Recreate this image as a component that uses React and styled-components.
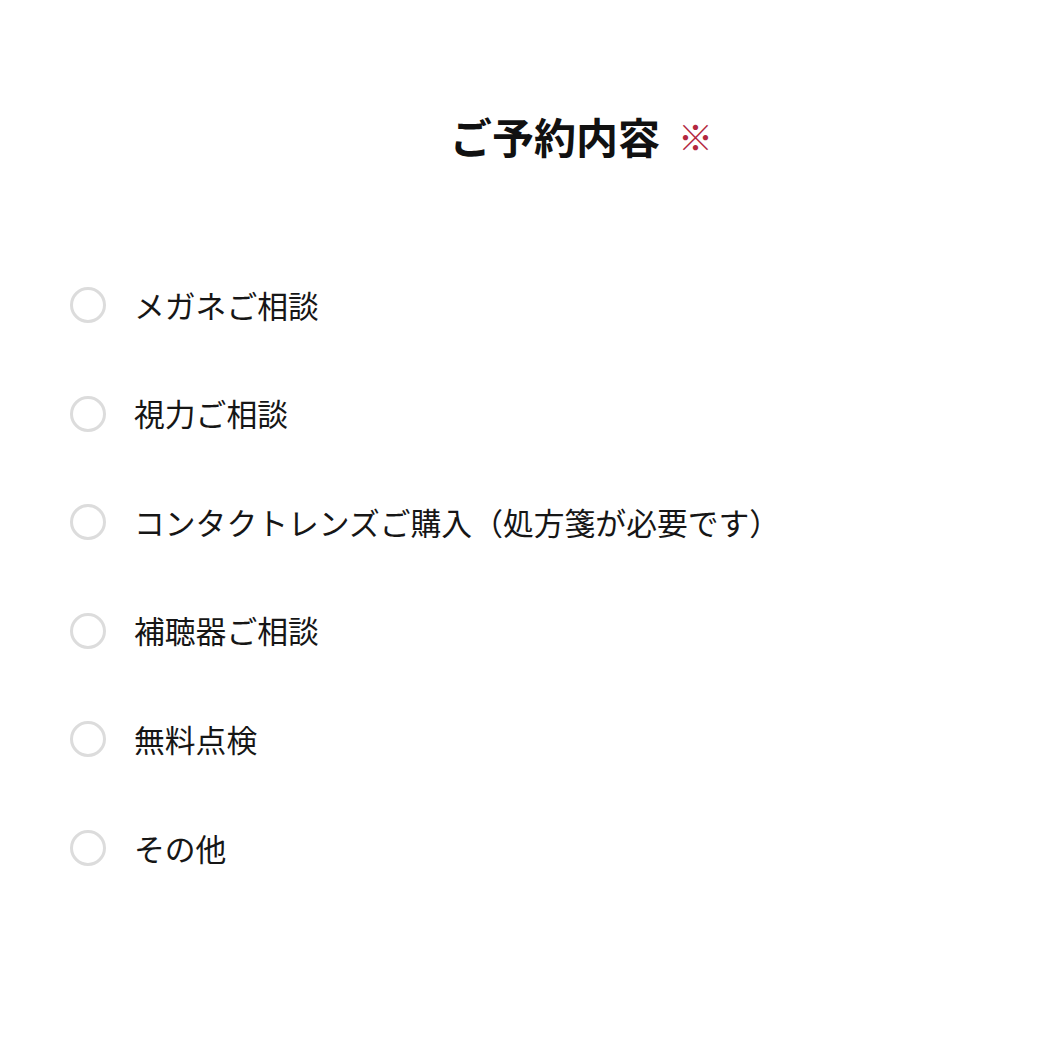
import React from 'react'
import styled, { createGlobalStyle } from 'styled-components'

const GlobalStyle = createGlobalStyle`
  body {
    margin: 0;
    background: #fff;
    font-family: "Noto Sans CJK JP", "Noto Sans", sans-serif;
  }
`

const Page = styled.div`
  width: 1050px;
  height: 1050px;
  box-sizing: border-box;
  padding: 107px 0 0 70px;
  background: #fff;
`

const Title = styled.h2`
  margin: 0 0 113px 380px;
  display: flex;
  align-items: center;
  gap: 18px;
  font-size: 42px;
  font-weight: 700;
  line-height: 58px;
  color: #111;
`

const Mark = styled.span`
  color: #b3283f;
  font-size: 35px;
  font-weight: 400;
`

const List = styled.div`
  display: flex;
  flex-direction: column;
  gap: 54.6px;
`

const Row = styled.label`
  display: flex;
  align-items: center;
  gap: 28px;
  height: 54px;
  cursor: pointer;
`

const Radio = styled.span`
  width: 36px;
  height: 36px;
  box-sizing: border-box;
  border-radius: 50%;
  border: 3px solid #dcdcdc;
  flex-shrink: 0;
`

const Label = styled.span`
  font-size: 30.8px;
  color: #161616;
  line-height: 1;
`

const items = [
  'メガネご相談',
  '視力ご相談',
  'コンタクトレンズご購入（処方箋が必要です）',
  '補聴器ご相談',
  '無料点検',
  'その他',
]

export default function App() {
  return (
    <Page>
      <GlobalStyle />
      <Title>
        ご予約内容<Mark>※</Mark>
      </Title>
      <List>
        {items.map((t) => (
          <Row key={t}>
            <Radio />
            <Label>{t}</Label>
          </Row>
        ))}
      </List>
    </Page>
  )
}
